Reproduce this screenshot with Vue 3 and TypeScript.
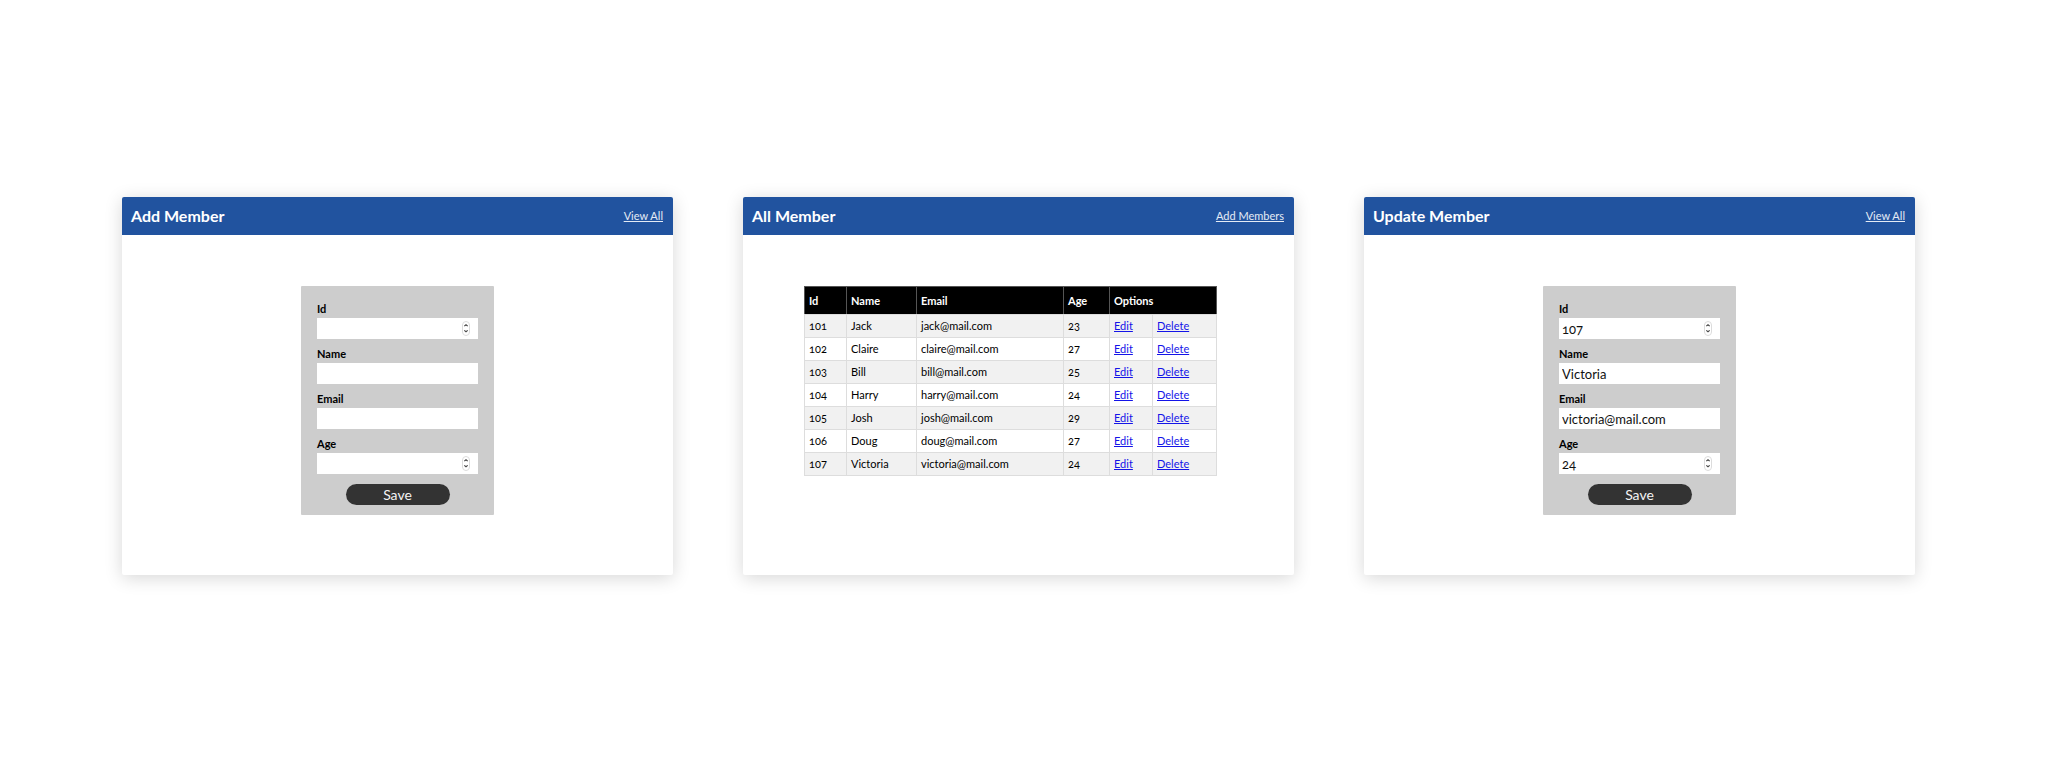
<script setup lang="ts">
import { ref } from 'vue'

interface Field {
  key: string
  label: string
  type: 'number' | 'text' | 'email'
  value: string
}

interface FormCard {
  id: string
  title: string
  fields: Field[]
}

interface Member {
  id: number
  name: string
  email: string
  age: number
}

function makeFields(id = '', name = '', email = '', age = ''): Field[] {
  return [
    { key: 'id', label: 'Id', type: 'number', value: id },
    { key: 'name', label: 'Name', type: 'text', value: name },
    { key: 'email', label: 'Email', type: 'email', value: email },
    { key: 'age', label: 'Age', type: 'number', value: age },
  ]
}

const forms = ref<FormCard[]>([
  { id: 'add', title: 'Add Member', fields: makeFields() },
  { id: 'update', title: 'Update Member', fields: makeFields('107', 'Victoria', 'victoria@mail.com', '24') },
])

const members: Member[] = [
  { id: 101, name: 'Jack', email: 'jack@mail.com', age: 23 },
  { id: 102, name: 'Claire', email: 'claire@mail.com', age: 27 },
  { id: 103, name: 'Bill', email: 'bill@mail.com', age: 25 },
  { id: 104, name: 'Harry', email: 'harry@mail.com', age: 24 },
  { id: 105, name: 'Josh', email: 'josh@mail.com', age: 29 },
  { id: 106, name: 'Doug', email: 'doug@mail.com', age: 27 },
  { id: 107, name: 'Victoria', email: 'victoria@mail.com', age: 24 },
]
</script>

<template>
  <main class="board">
    <section v-for="form in forms" :key="form.id" class="card" :class="form.id">
      <header class="bar">
        <h2>{{ form.title }}</h2>
        <a href="#all">View All</a>
      </header>
      <form class="panel" @submit.prevent>
        <div v-for="field in form.fields" :key="field.key" class="field">
          <label :for="`${form.id}-${field.key}`">{{ field.label }}</label>
          <div class="control">
            <input :id="`${form.id}-${field.key}`" v-model="field.value" :type="field.type" />
            <svg v-if="field.type === 'number'" class="stepper" viewBox="0 0 8 15" aria-hidden="true">
              <rect x="0.5" y="0.5" width="7" height="14" rx="3.5" fill="#fff" stroke="#dcdcdc" />
              <path d="M2.3 5.2 4 3.8 5.7 5.2M2.3 9.3 4 10.7 5.7 9.3" fill="none" stroke="#444" stroke-width="1.1" />
            </svg>
          </div>
        </div>
        <button type="submit">Save</button>
      </form>
    </section>

    <section class="card list">
      <header class="bar">
        <h2>All Member</h2>
        <a href="#add">Add Members</a>
      </header>
      <table>
        <colgroup>
          <col class="c-id" />
          <col class="c-name" />
          <col class="c-email" />
          <col class="c-age" />
          <col class="c-edit" />
          <col />
        </colgroup>
        <thead>
          <tr>
            <th>Id</th>
            <th>Name</th>
            <th>Email</th>
            <th>Age</th>
            <th colspan="2">Options</th>
          </tr>
        </thead>
        <tbody>
          <tr v-for="member in members" :key="member.id">
            <td>{{ member.id }}</td>
            <td>{{ member.name }}</td>
            <td>{{ member.email }}</td>
            <td>{{ member.age }}</td>
            <td><a href="#edit">Edit</a></td>
            <td><a href="#delete">Delete</a></td>
          </tr>
        </tbody>
      </table>
    </section>
  </main>
</template>

<style>
body {
  margin: 0;
  background: #fff;
}
</style>

<style scoped>
.board {
  box-sizing: border-box;
  display: grid;
  grid-template-columns: repeat(3, 1fr);
  gap: 70px;
  padding: 197px 139px 48px 122px;
  font-family: Lato, 'Open Sans', sans-serif;
  font-variant-numeric: oldstyle-nums;
  color: #000;
}

.card {
  box-sizing: border-box;
  min-height: 378px;
  padding-bottom: 60px;
  border-radius: 2px;
  background: #fff;
  box-shadow: 0 3px 18px rgba(0, 0, 0, 0.16);
}

.add {
  order: 1;
}

.list {
  order: 2;
}

.update {
  order: 3;
}

.bar {
  display: flex;
  align-items: center;
  justify-content: space-between;
  height: 38px;
  padding: 0 10px 0 9px;
  border-radius: 2px 2px 0 0;
  background: #21539f;
  color: #fff;
}

.bar h2 {
  margin: 0;
  font-size: 16px;
  line-height: 20px;
}

.bar a {
  color: #e4ebf5;
  font-size: 11px;
  line-height: 14px;
}

.panel {
  box-sizing: border-box;
  display: flex;
  flex-direction: column;
  gap: 8px;
  width: 193px;
  margin: 51px auto 0;
  padding: 16px 16px 10px;
  border-radius: 1px;
  background: #cdcdcd;
}

.field {
  display: flex;
  flex-direction: column;
  gap: 2px;
}

.field label {
  font-size: 11px;
  font-weight: 700;
  line-height: 14px;
}

.control {
  position: relative;
}

.control input {
  box-sizing: border-box;
  display: block;
  width: 100%;
  height: 21px;
  padding: 0 3px;
  border: 0;
  border-radius: 0;
  background: #fff;
  color: #111;
  font: inherit;
  font-size: 13px;
  font-variant-numeric: oldstyle-nums;
  appearance: textfield;
}

.control input::-webkit-inner-spin-button {
  display: none;
}

.stepper {
  position: absolute;
  top: 3px;
  right: 8px;
  width: 8px;
  height: 15px;
}

.panel button {
  align-self: center;
  width: 104px;
  height: 21px;
  margin-top: 2px;
  padding: 0;
  border: 0;
  border-radius: 11px;
  background: #333;
  color: #f4f4f4;
  font: inherit;
  font-size: 14px;
  line-height: 21px;
}

table {
  width: 75%;
  margin: 51px 0 0 61px;
  border-collapse: collapse;
  table-layout: fixed;
  font-size: 11px;
  line-height: 14px;
}

.c-id {
  width: 42px;
}

.c-name {
  width: 70px;
}

.c-email {
  width: 147px;
}

.c-age {
  width: 46px;
}

.c-edit {
  width: 43px;
}

th,
td {
  box-sizing: border-box;
  padding: 4px;
  border: 1px solid #ddd;
  text-align: left;
}

th {
  height: 28px;
  border-color: #555;
  border-bottom-color: #ddd;
  background: #000;
  color: #fff;
}

td {
  height: 23px;
}

tbody tr:nth-child(odd) {
  background: #f1f1f1;
}

td a {
  color: #1414e8;
}
</style>
